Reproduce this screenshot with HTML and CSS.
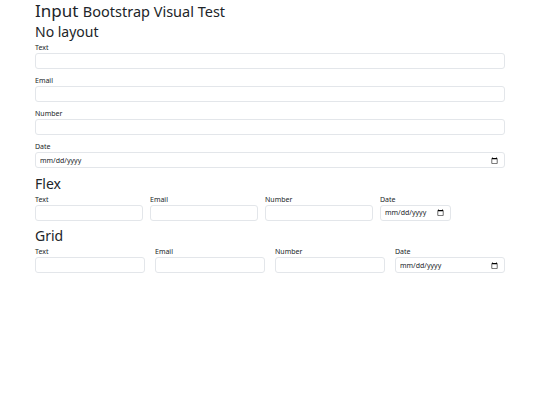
FILE: index.html
```html
<!DOCTYPE html>
<html>
<head>
  <link rel="stylesheet" href="styles.css">
</head>
<body>
  <div class="container">
    <h1 class="title">Input <small>Bootstrap Visual Test</small></h1>

    <section class="section">
      <h2>No layout</h2>
      <div class="stack">
        <div class="field">
          <label for="t1">Text</label>
          <input id="t1" type="text" class="form-control">
        </div>
        <div class="field">
          <label for="e1">Email</label>
          <input id="e1" type="email" class="form-control">
        </div>
        <div class="field">
          <label for="n1">Number</label>
          <input id="n1" type="number" class="form-control">
        </div>
        <div class="field">
          <label for="d1">Date</label>
          <input id="d1" type="date" class="form-control">
        </div>
      </div>
    </section>

    <section class="section">
      <h2>Flex</h2>
      <div class="flex-row">
        <div class="field">
          <label for="t2">Text</label>
          <input id="t2" type="text" class="form-control">
        </div>
        <div class="field">
          <label for="e2">Email</label>
          <input id="e2" type="email" class="form-control">
        </div>
        <div class="field">
          <label for="n2">Number</label>
          <input id="n2" type="number" class="form-control">
        </div>
        <div class="field">
          <label for="d2">Date</label>
          <input id="d2" type="date" class="form-control date">
        </div>
      </div>
    </section>

    <section class="section">
      <h2>Grid</h2>
      <div class="grid-row">
        <div class="field">
          <label for="t3">Text</label>
          <input id="t3" type="text" class="form-control">
        </div>
        <div class="field">
          <label for="e3">Email</label>
          <input id="e3" type="email" class="form-control">
        </div>
        <div class="field">
          <label for="n3">Number</label>
          <input id="n3" type="number" class="form-control">
        </div>
        <div class="field">
          <label for="d3">Date</label>
          <input id="d3" type="date" class="form-control">
        </div>
      </div>
    </section>
  </div>
</body>
</html>
```

FILE: styles.css
```css
* {
  box-sizing: border-box;
  margin: 0;
  padding: 0;
}

body {
  font-family: 'Noto Sans', 'Open Sans', sans-serif;
  color: #212529;
  background: #ffffff;
}

.container {
  margin: 0 35px;
}

.title {
  font-size: 17px;
  font-weight: 400;
  line-height: 20px;
  padding-top: 1px;
  margin-bottom: 2px;
}

.title small {
  font-size: 14.5px;
}

h2 {
  font-size: 14px;
  font-weight: 400;
  line-height: 17px;
  margin-bottom: 3px;
}

.section {
  margin-bottom: 6.5px;
}

label {
  display: block;
  font-size: 7px;
  line-height: 10px;
}

.form-control {
  display: block;
  width: 100%;
  height: 16px;
  padding: 0 4px;
  font-family: inherit;
  font-size: 7px;
  color: #212529;
  background: #ffffff;
  border: 1px solid #e3e6ea;
  border-radius: 3px;
  outline: none;
}

/* tighten the native date segments: mm/dd/yyyy */
.form-control::-webkit-datetime-edit-month-field,
.form-control::-webkit-datetime-edit-day-field,
.form-control::-webkit-datetime-edit-year-field,
.form-control::-webkit-datetime-edit-text {
  padding: 0;
  margin: 0;
}

.stack .field {
  margin-bottom: 7px;
}

.stack .field:last-child {
  margin-bottom: 0;
}

.flex-row {
  display: flex;
  gap: 7px;
}

.flex-row .form-control {
  width: 108px;
}

.flex-row .form-control.date {
  width: 71px;
}

.grid-row {
  display: grid;
  grid-template-columns: repeat(4, 1fr);
  gap: 10px;
}
```
